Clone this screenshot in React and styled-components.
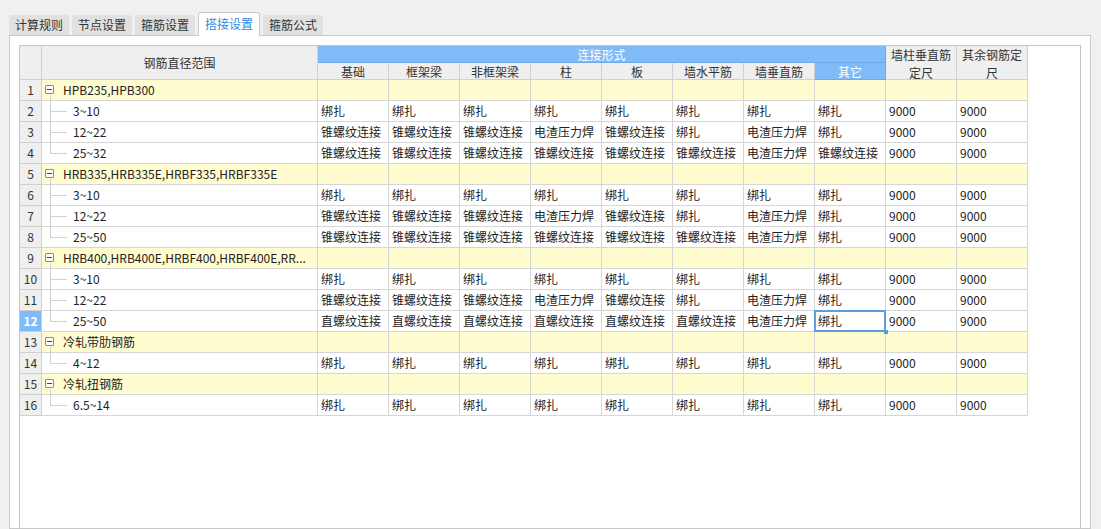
import React from 'react';
import styled, { createGlobalStyle, css } from 'styled-components';

const GlobalStyle = createGlobalStyle`
  html, body {
    margin: 0;
    padding: 0;
    background: #f0f0f0;
    overflow: hidden;
  }
  body {
    font-family: "Noto Sans CJK SC", "Noto Sans", sans-serif;
    font-size: 12px;
    color: #222;
  }
`;

const Page = styled.div`
  width: 1101px;
  height: 529px;
  overflow: hidden;
  display: flex;
  flex-direction: column;
`;

const TabBar = styled.div`
  display: flex;
  align-items: flex-end;
  gap: 3px;
  padding: 12px 0 0 9px;
  height: 23px;
  position: relative;
  z-index: 1;
`;

const Tab = styled.div`
  height: 20px;
  line-height: 19px;
  padding: 0 6px;
  box-sizing: border-box;
  background: #e1e1e1;
  color: #333;
  border-radius: 3px 3px 0 0;
  white-space: nowrap;
  ${(p) =>
    p.$active &&
    css`
      height: 24px;
      line-height: 22px;
      margin-bottom: -1px;
      background: #fff;
      color: #2d8ae5;
      border: 1px solid #c9c9c9;
      border-bottom: none;
    `}
`;

const Panel = styled.div`
  margin-left: 9px;
  width: 1082px;
  flex: 1;
  box-sizing: border-box;
  background: #fff;
  border: 1px solid #c9c9c9;
  padding: 9px 9px 0 9px;
  display: flex;
`;

const GridBox = styled.div`
  flex: 1;
  border: 1px solid #c4c4c4;
  border-bottom: none;
  background: #fff;
`;

const Grid = styled.div`
  display: grid;
  grid-template-columns: 22px 276px repeat(10, 71px);
  grid-template-rows: 17px 17px repeat(16, 21px);
`;

const Cell = styled.div`
  box-sizing: border-box;
  border-right: 1px solid #d6d6d6;
  border-bottom: 1px solid #d6d6d6;
  padding: 0 0 0 3px;
  line-height: 20px;
  white-space: nowrap;
  overflow: hidden;
  background: ${(p) => (p.$group ? '#fffdd0' : '#fff')};
  position: relative;
  ${(p) =>
    p.$selected &&
    css`
      overflow: visible;
      &::after {
        content: '';
        position: absolute;
        left: -1px;
        top: -1px;
        right: -1px;
        bottom: -1px;
        border: 2px solid #5c9de0;
        pointer-events: none;
      }
      &::before {
        content: '';
        position: absolute;
        right: -3px;
        bottom: -3px;
        width: 4px;
        height: 4px;
        background: #5c9de0;
        z-index: 2;
      }
    `}
`;

const HeadCell = styled.div`
  box-sizing: border-box;
  border-right: 1px solid #d0d0d0;
  border-bottom: 1px solid #d0d0d0;
  background: #efefef;
  color: #333;
  display: flex;
  align-items: center;
  justify-content: center;
  text-align: center;
  line-height: 17px;
  grid-column: ${(p) => p.$col};
  grid-row: ${(p) => p.$row};
  ${(p) =>
    p.$blue &&
    css`
      background: #80bbf8;
      color: #fff;
      border-right-color: #6fa9ea;
      border-bottom-color: #6fa9ea;
    `}
  ${(p) =>
    p.$wrap &&
    css`
      white-space: normal;
      padding: 0 5px;
      line-height: 18px;
      align-items: flex-start;
      padding-top: 0;
    `}
`;

const NumCell = styled.div`
  box-sizing: border-box;
  border-right: 1px solid #d0d0d0;
  border-bottom: 1px solid #d0d0d0;
  background: ${(p) => (p.$active ? '#80bbf8' : '#efefef')};
  color: ${(p) => (p.$active ? '#fff' : '#333')};
  font-weight: ${(p) => (p.$active ? 'bold' : 'normal')};
  text-align: center;
  line-height: 20px;
`;

const TreeCell = styled(Cell)`
  padding-left: ${(p) => (p.$group ? '21px' : '31px')};
  ${(p) =>
    !p.$group &&
    css`
      &::before {
        content: '';
        position: absolute;
        left: 8px;
        top: 0;
        width: 0;
        height: ${p.$last ? '10px' : '21px'};
        border-left: 1px solid #d2d2d2;
      }
      &::after {
        content: '';
        position: absolute;
        left: 8px;
        top: 10px;
        width: 17px;
        border-top: 1px solid #d2d2d2;
      }
    `}
  ${(p) =>
    p.$group &&
    css`
      &::after {
        content: '';
        position: absolute;
        left: 8px;
        top: 15px;
        height: 6px;
        border-left: 1px solid #d2d2d2;
      }
    `}
`;

const Toggle = styled.span`
  position: absolute;
  left: 3px;
  top: 5px;
  width: 9px;
  height: 9px;
  box-sizing: border-box;
  border: 1px solid #8a8a8a;
  border-radius: 1px;
  background: #fff;
  &::before {
    content: '';
    position: absolute;
    left: 1px;
    right: 1px;
    top: 3px;
    border-top: 1px solid #444;
  }
`;

const cols = ['基础', '框架梁', '非框架梁', '柱', '板', '墙水平筋', '墙垂直筋', '其它'];

const BZ = '绑扎';
const ZL = '锥螺纹连接';
const DZ = '电渣压力焊';
const SL = '直螺纹连接';

const allBZ = Array(8).fill(BZ);
const mid = [ZL, ZL, ZL, DZ, ZL, BZ, DZ, BZ];

const groups = [
  {
    name: 'HPB235,HPB300',
    items: [
      ['3~10', allBZ],
      ['12~22', mid],
      ['25~32', [ZL, ZL, ZL, ZL, ZL, ZL, DZ, ZL]],
    ],
  },
  {
    name: 'HRB335,HRB335E,HRBF335,HRBF335E',
    items: [
      ['3~10', allBZ],
      ['12~22', mid],
      ['25~50', [ZL, ZL, ZL, ZL, ZL, ZL, DZ, BZ]],
    ],
  },
  {
    name: 'HRB400,HRB400E,HRBF400,HRBF400E,RR...',
    items: [
      ['3~10', allBZ],
      ['12~22', mid],
      ['25~50', [SL, SL, SL, SL, SL, SL, DZ, BZ]],
    ],
  },
  { name: '冷轧带肋钢筋', items: [['4~12', allBZ]] },
  { name: '冷轧扭钢筋', items: [['6.5~14', allBZ]] },
];

const SELECTED_ROW = 12;

export default function App() {
  const rows = [];
  let n = 0;
  groups.forEach((g) => {
    n += 1;
    rows.push(
      <React.Fragment key={`g${n}`}>
        <NumCell>{n}</NumCell>
        <TreeCell $group>
          <Toggle />
          {g.name}
        </TreeCell>
        {Array.from({ length: 10 }).map((_, i) => (
          <Cell key={i} $group />
        ))}
      </React.Fragment>
    );
    g.items.forEach(([range, vals], idx) => {
      n += 1;
      const row = n;
      rows.push(
        <React.Fragment key={`r${row}`}>
          <NumCell $active={row === SELECTED_ROW}>{row}</NumCell>
          <TreeCell $last={idx === g.items.length - 1}>{range}</TreeCell>
          {vals.map((v, i) => (
            <Cell key={i} $selected={row === SELECTED_ROW && i === 7}>
              {v}
            </Cell>
          ))}
          <Cell>9000</Cell>
          <Cell>9000</Cell>
        </React.Fragment>
      );
    });
  });

  return (
    <Page>
      <GlobalStyle />
      <TabBar>
        <Tab>计算规则</Tab>
        <Tab>节点设置</Tab>
        <Tab>箍筋设置</Tab>
        <Tab $active>搭接设置</Tab>
        <Tab>箍筋公式</Tab>
      </TabBar>
      <Panel>
        <GridBox>
          <Grid>
            <HeadCell $col="1" $row="1 / 3" />
            <HeadCell $col="2" $row="1 / 3">钢筋直径范围</HeadCell>
            <HeadCell $col="3 / 11" $row="1" $blue>连接形式</HeadCell>
            {cols.map((c, i) => (
              <HeadCell key={c} $col={`${i + 3}`} $row="2" $blue={c === '其它'}>
                {c}
              </HeadCell>
            ))}
            <HeadCell $col="11" $row="1 / 3" $wrap>墙柱垂直筋定尺</HeadCell>
            <HeadCell $col="12" $row="1 / 3" $wrap>其余钢筋定尺</HeadCell>
            {rows}
          </Grid>
        </GridBox>
      </Panel>
    </Page>
  );
}
